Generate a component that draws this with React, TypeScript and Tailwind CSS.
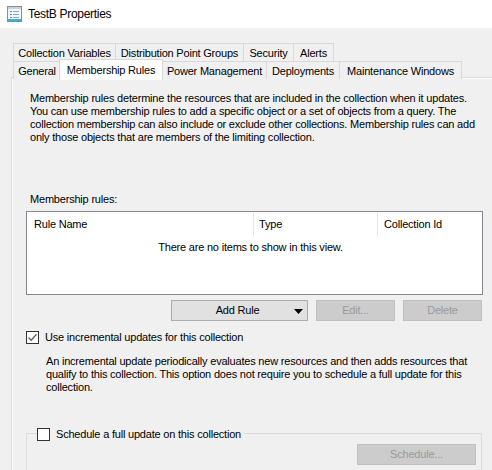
import React from "react";

const font = { fontFamily: '"Liberation Sans", Arial, sans-serif' };

function Check({ checked }: { checked?: boolean }) {
  return (
    <span className="flex h-[13px] w-[13px] shrink-0 items-center justify-center border border-[#333333] bg-white">
      {checked && (
        <svg width="11" height="11" viewBox="0 0 11 11">
          <path d="M1.5 5.5 L4.2 8.2 L9.5 2.3" fill="none" stroke="#5c5c5c" strokeWidth="1.3" />
        </svg>
      )}
    </span>
  );
}

function Tab({ label, w, first }: { label: string; w: string; first?: boolean }) {
  return (
    <div
      className={`${w} ${first ? "" : "-ml-px"} flex h-[18px] items-center justify-center whitespace-nowrap border border-b-0 border-[#d9d9d9] bg-[#f0f0f0] text-[11px] leading-[16px] text-black`}
    >
      {label}
    </div>
  );
}

export default function App() {
  return (
    <div className="h-[470px] w-[492px] overflow-hidden bg-[#f0f0f0] tracking-[-0.2px] text-black" style={font}>
      {/* Title bar */}
      <div className="flex h-[28px] items-center bg-white pl-[7px]">
        <svg width="15" height="16" viewBox="0 0 15 16" className="mb-[1px]">
          <rect x="0.5" y="0.5" width="14" height="15" fill="#f4f6f8" stroke="#8a8f96" />
          <rect x="1" y="1" width="13" height="2" fill="#c9d3dc" />
          <rect x="3" y="5" width="2" height="1" fill="#3a8fd6" />
          <rect x="6" y="5" width="6" height="1" fill="#8aa6bd" />
          <rect x="3" y="8" width="2" height="1" fill="#3a8fd6" />
          <rect x="6" y="8" width="6" height="1" fill="#8aa6bd" />
          <rect x="3" y="11" width="2" height="1" fill="#3a8fd6" />
          <rect x="6" y="11" width="6" height="1" fill="#8aa6bd" />
          <rect x="1" y="13" width="13" height="2" fill="#2bb3e6" />
        </svg>
        <span className="ml-[6px] text-[12px] leading-[16px] tracking-[-0.3px]">TestB Properties</span>
      </div>

      {/* Tabs row 1 */}
      <div className="ml-[13px] mt-[15px] flex">
        <Tab label="Collection Variables" w="w-[103px]" first />
        <Tab label="Distribution Point Groups" w="w-[129px]" />
        <Tab label="Security" w="w-[51px]" />
        <Tab label="Alerts" w="w-[41px]" />
      </div>

      {/* Tabs row 2 */}
      <div className="relative z-10 -mt-px ml-[13px] flex h-[17px] items-start border-t border-t-transparent">
        <Tab label="General" w="w-[48px]" first />
        <div className="-ml-[2px] -mt-[2px] flex h-[21px] w-[104px] items-start justify-center whitespace-nowrap border border-b-0 border-[#d9d9d9] bg-white pt-[2px] text-[11px] leading-[16px]">
          Membership Rules
        </div>
        <Tab label="Power Management" w="w-[105px]" />
        <Tab label="Deployments" w="w-[74px]" />
        <Tab label="Maintenance Windows" w="w-[123px]" />
      </div>

      {/* Panel */}
      <div className="ml-[11px] h-[400px] border-l border-t border-[#d9d9d9] bg-[#f0f0f0] pl-[14px] text-[11px] leading-[13px] shadow-[inset_1px_1px_0_#ffffff]">
        <p className="ml-[4px] whitespace-nowrap pt-[14px]">
          Membership rules determine the resources that are included in the collection when it updates.
          <br />
          You can use membership rules to add a specific object or a set of objects from a query. The
          <br />
          collection membership can also include or exclude other collections. Membership rules can add
          <br />
          only those objects that are members of the limiting collection.
        </p>

        <div className="ml-[4px] mt-[49px]">Membership rules:</div>

        {/* List view */}
        <div className="mt-[5px] h-[84px] w-[457px] border border-[#828790] bg-white">
          <div className="flex h-[25px] items-center">
            <div className="w-[226px] pl-[7px]">Rule Name</div>
            <div className="h-[24px] w-px bg-[#e5e5e5]" />
            <div className="w-[123px] pl-[5px]">Type</div>
            <div className="h-[24px] w-px bg-[#e5e5e5]" />
            <div className="pl-[6px]">Collection Id</div>
          </div>
          <div className="mt-[4px] pr-[8px] text-center">There are no items to show in this view.</div>
        </div>

        {/* Buttons */}
        <div className="mt-[5px] flex w-[456px] justify-end gap-[8px]">
          <div className="relative flex h-[21px] w-[137px] items-center justify-center border border-[#adadad] bg-[#e1e1e1]">
            <span className="-ml-[4px]">Add Rule</span>
            <svg width="9" height="5" viewBox="0 0 9 5" className="absolute right-[4px] top-[8px]">
              <path d="M0 0 H9 L4.5 5 Z" fill="#000" />
            </svg>
          </div>
          <div className="flex h-[21px] w-[79px] items-center justify-center border border-[#bfbfbf] bg-[#cccccc] text-[#9a9a9a]">
            Edit...
          </div>
          <div className="flex h-[21px] w-[79px] items-center justify-center border border-[#bfbfbf] bg-[#cccccc] text-[#9a9a9a]">
            Delete
          </div>
        </div>

        {/* Incremental */}
        <div className="mt-[9px] flex h-[14px] items-center gap-[6px]">
          <Check checked />
          <span>Use incremental updates for this collection</span>
        </div>
        <p className="ml-[20px] mt-[11px] whitespace-nowrap">
          An incremental update periodically evaluates new resources and then adds resources that
          <br />
          qualify to this collection. This option does not require you to schedule a full update for this
          <br />
          collection.
        </p>

        {/* Group box */}
        <div className="relative mt-[39px] h-[60px] w-[456px] border border-b-0 border-[#dcdcdc] pt-[10px]">
          <div className="absolute -top-[7px] left-[10px] flex h-[14px] items-center gap-[6px] bg-[#f0f0f0] pr-[3px]">
            <Check />
            <span>Schedule a full update on this collection</span>
          </div>
          <div className="flex justify-end pr-[5px]">
            <div className="flex h-[21px] w-[119px] items-center justify-center border border-[#bfbfbf] bg-[#cccccc] text-[#9a9a9a]">
              Schedule...
            </div>
          </div>
        </div>
      </div>
    </div>
  );
}
